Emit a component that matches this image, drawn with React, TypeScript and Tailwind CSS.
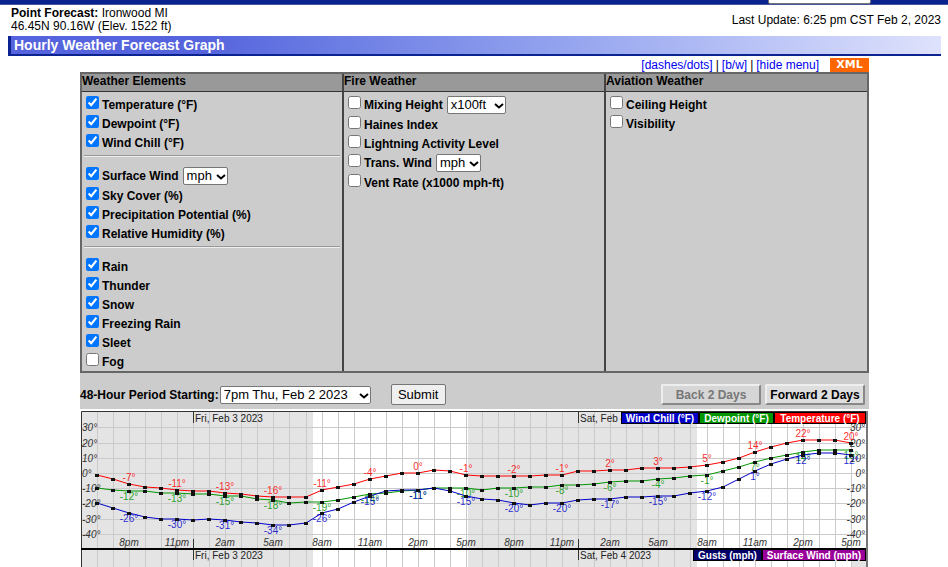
import { Fragment, ReactNode, SelectHTMLAttributes } from 'react';

interface ElementItem {
  id: string;
  label: string;
  checked?: boolean;
  units?: string[];
}

const weatherGroups: ElementItem[][] = [
  [
    { id: 'temp', label: 'Temperature (°F)', checked: true },
    { id: 'dewpoint', label: 'Dewpoint (°F)', checked: true },
    { id: 'chill', label: 'Wind Chill (°F)', checked: true },
  ],
  [
    { id: 'wind', label: 'Surface Wind', checked: true, units: ['mph', 'kts'] },
    { id: 'sky', label: 'Sky Cover (%)', checked: true },
    { id: 'pop', label: 'Precipitation Potential (%)', checked: true },
    { id: 'humidity', label: 'Relative Humidity (%)', checked: true },
  ],
  [
    { id: 'rain', label: 'Rain', checked: true },
    { id: 'thunder', label: 'Thunder', checked: true },
    { id: 'snow', label: 'Snow', checked: true },
    { id: 'fzrain', label: 'Freezing Rain', checked: true },
    { id: 'sleet', label: 'Sleet', checked: true },
    { id: 'fog', label: 'Fog' },
  ],
];

const fireGroups: ElementItem[][] = [
  [
    { id: 'mixing', label: 'Mixing Height', units: ['x100ft', 'x100m'] },
    { id: 'haines', label: 'Haines Index' },
    { id: 'lal', label: 'Lightning Activity Level' },
    { id: 'transwind', label: 'Trans. Wind', units: ['mph', 'kts'] },
    { id: 'vent', label: 'Vent Rate (x1000 mph-ft)' },
  ],
];

const aviationGroups: ElementItem[][] = [
  [
    { id: 'ceiling', label: 'Ceiling Height' },
    { id: 'visibility', label: 'Visibility' },
  ],
];

// hourly values, 6pm Thu through 5pm Sat
const temperature = [
  -1, -4, -7, -9, -10, -11, -12, -12, -13, -14, -15, -16, -16, -16, -11, -9, -7, -4, -2, 0, 0, 2, 1, -1,
  -2, -2, -2, -2, -1, -1, 1, 1, 2, 2, 3, 3, 3, 4, 5, 7, 10, 14, 17, 20, 22, 22, 22, 20,
];
const dewpoint = [
  -10, -11, -12, -12, -13, -13, -14, -14, -15, -15, -17, -18, -20, -19, -19, -18, -16, -14, -13, -12, -11, -10, -10, -10,
  -11, -10, -10, -9, -9, -8, -8, -7, -6, -5, -5, -4, -3, -2, -1, 1, 4, 7, 10, 12, 14, 15, 15, 15,
];
const windChill = [
  -20, -23, -26, -29, -30, -30, -31, -30, -31, -32, -33, -34, -34, -33, -26, -24, -19, -15, -12, -11, -11, -10, -12, -15,
  -17, -18, -20, -21, -20, -20, -18, -17, -17, -16, -16, -15, -15, -13, -12, -9, -4, 1, 6, 9, 12, 13, 13, 12,
];

const hourLabels = ['8pm', '11pm', '2am', '5am', '8am', '11am', '2pm', '5pm'];

const xAt = (i: number) => Math.round(17 + i * 16.04);
const yAt = (v: number) => Math.round(63 - v * 1.52);

function Select({ options, ...props }: { options: string[] } & SelectHTMLAttributes<HTMLSelectElement>) {
  return (
    <span className="relative flex font-normal">
      <select
        className="h-[18px] w-full appearance-none rounded-xs border border-[#767676] bg-white pr-3.5 pl-[3px] text-[13px] leading-4"
        {...props}
      >
        {options.map(o => (
          <option key={o}>{o}</option>
        ))}
      </select>
      <svg viewBox="0 0 10 6" className="pointer-events-none absolute top-[7px] right-0.5 h-1.5 w-2.5" fill="none" stroke="#000" strokeWidth={2}>
        <path d="M1 1L5 4.5L9 1" />
      </svg>
    </span>
  );
}

function ElementRow({ item }: { item: ElementItem }) {
  return (
    <div className="flex items-start">
      <input id={item.id} type="checkbox" defaultChecked={item.checked} className="h-[13px] w-[13px] shrink-0" />
      <label htmlFor={item.id} className="ml-[3px] leading-[18px]">
        {item.label}
      </label>
      {item.units && (
        <div className="mb-px ml-1">
          <Select options={item.units} aria-label={`${item.label} units`} />
        </div>
      )}
    </div>
  );
}

function ElementColumn({ title, groups }: { title: string; groups: ElementItem[][] }) {
  return (
    <section className="border-l-2 border-[#444] first:border-l-0">
      <h2 className="h-[18px] border-b border-[#333] bg-[#999] leading-[15px]">{title}</h2>
      <div className="px-1 pt-1">
        {groups.map((group, i) => (
          <Fragment key={i}>
            {i > 0 && <hr className="-mx-0.5 mt-[3px] mb-2.5 h-0.5 border-t border-b border-t-[#999] border-b-[#eee]" />}
            <div className="flex flex-col gap-px">
              {group.map(item => (
                <ElementRow key={item.id} item={item} />
              ))}
            </div>
          </Fragment>
        ))}
      </div>
    </section>
  );
}

function Series({ values, color, above }: { values: number[]; color: string; above?: boolean }) {
  return (
    <g>
      {values.map((v, i) =>
        i % 3 === 2 ? (
          <text key={i} x={xAt(i)} y={yAt(v) + (above ? -3 : 9)} textAnchor="middle" fill={color} fillOpacity={0.85}>
            {v}°
          </text>
        ) : null
      )}
      <polyline points={values.map((v, i) => `${xAt(i)},${yAt(v)}`).join(' ')} fill="none" stroke={color} />
      {values.map((v, i) => (
        <rect key={i} x={xAt(i) - 2} y={yAt(v) - 1} width={4} height={3} fill="#111" />
      ))}
    </g>
  );
}

function Legend({ x, y, width, color, children }: { x: number; y: number; width: number; color: string; children: ReactNode }) {
  return (
    <g>
      <rect x={x + 0.5} y={y + 0.5} width={width - 1} height={11} fill={color} stroke="#000" />
      <text x={x + width / 2} y={y + 10} textAnchor="middle" fill="#fff" fontWeight="bold">
        {children}
      </text>
    </g>
  );
}

function ForecastChart() {
  const degrees = [30, 20, 10, 0, -10, -20, -30, -40];
  return (
    <svg viewBox="0 0 789 157" className="block w-full text-[10px]" role="img" aria-label="Hourly forecast graph">
      <rect x={1} y={1} width={787} height={156} fill="#fff" />
      <rect x={2} y={1} width={231} height={156} fill="#e4e4e4" />
      <rect x={388} y={1} width={229} height={156} fill="#e4e4e4" />
      <rect x={772} y={139} width={15} height={18} fill="#e4e4e4" />

      <g stroke="#cacaca" shapeRendering="crispEdges">
        {temperature.map((_, i) => (
          <line key={i} x1={xAt(i) + 0.5} x2={xAt(i) + 0.5} y1={2} y2={157} />
        ))}
        {degrees.map(d => (
          <line key={d} x1={2} x2={786} y1={yAt(d) + 0.5} y2={yAt(d) + 0.5} />
        ))}
      </g>

      <g fill="#333" fontStyle="italic">
        {degrees.map(d => (
          <Fragment key={d}>
            <text x={2} y={yAt(d) + 4}>{d}°</text>
            <text x={785} y={yAt(d) + 4} textAnchor="end">{d}°</text>
          </Fragment>
        ))}
        {temperature.map((_, i) =>
          i % 3 === 2 ? (
            <text key={i} x={xAt(i)} y={136} textAnchor="middle">
              {hourLabels[((i - 2) / 3) % 8]}
            </text>
          ) : null
        )}
      </g>

      <path d="M113.5 2V13M113.5 129V150M498.5 2V13M498.5 129V150" stroke="#333" />
      <g fill="#222">
        <text x={115} y={12}>Fri, Feb 3 2023</text>
        <text x={500} y={12}>Sat, Feb 4 2023</text>
        <text x={115} y={149}>Fri, Feb 3 2023</text>
        <text x={500} y={149}>Sat, Feb 4 2023</text>
      </g>

      <Series values={temperature} color="#f00" above />
      <Series values={dewpoint} color="#009600" />
      <Series values={windChill} color="#0000c8" />

      <path d="M1.5 157V1.5H787" fill="none" stroke="#333" />
      <rect x={786} y={1} width={2} height={156} fill="#777" />
      <rect x={1} y={138} width={785} height={2} fill="#000" />

      <Legend x={541} y={2} width={78} color="#0000c8">Wind Chill (°F)</Legend>
      <Legend x={619} y={2} width={75} color="#009600">Dewpoint (°F)</Legend>
      <Legend x={694} y={2} width={92} color="#f00">Temperature (°F)</Legend>
      <Legend x={613} y={139} width={69} color="#000066">Gusts (mph)</Legend>
      <Legend x={682} y={139} width={104} color="#990099">Surface Wind (mph)</Legend>
    </svg>
  );
}

export default function App() {
  return (
    <div className="bg-white font-['Liberation_Sans',Arial,sans-serif] text-xs text-black">
      <div className="flex h-[5px] items-end justify-end overflow-hidden border-b border-[#44559c] bg-[#0a2390] pr-[77px]">
        <input type="text" aria-label="Search" className="h-5 w-[103px] shrink-0 rounded-xs border border-[#767676] bg-white" />
      </div>

      <div className="pr-[7px] pl-2">
        <header className="flex items-center justify-between pt-0.5 pl-[3px] leading-[13px]">
          <p>
            <b>Point Forecast:</b> Ironwood MI
            <br />
            46.45N 90.16W (Elev. 1522 ft)
          </p>
          <p>Last Update: 6:25 pm CST Feb 2, 2023</p>
        </header>

        <h1 className="mt-[3px] h-5 border-b-2 border-l-3 border-[#0c2492] bg-linear-to-r from-[#5563dc] from-20% to-[#dfe2fc] pl-[3px] text-sm leading-[18px] font-bold text-white">
          Hourly Weather Forecast Graph
        </h1>

        <main className="mx-auto w-full max-w-[789px]">
          <nav className="mt-0.5 flex h-3.5 items-center justify-end gap-[3px]">
            <a href="#dashes" className="text-[#0000ee]">[dashes/dots]</a>|
            <a href="#bw" className="text-[#0000ee]">[b/w]</a>|
            <a href="#hide" className="text-[#0000ee]">[hide menu]</a>
            <a
              href="#xml"
              className="ml-2 h-3.5 w-[39px] bg-[#ff6600] text-center font-['DejaVu_Sans',sans-serif] text-[11px] leading-[13px] font-bold text-white"
            >
              XML
            </a>
          </nav>

          <form className="mb-px bg-[#ccc] pb-1 font-bold">
            <div className="grid grid-cols-[260fr_262fr_263fr] border-2 border-[#666]">
              <ElementColumn title="Weather Elements" groups={weatherGroups} />
              <ElementColumn title="Fire Weather" groups={fireGroups} />
              <ElementColumn title="Aviation Weather" groups={aviationGroups} />
            </div>

            <div className="flex items-center pt-[11px]">
              <label htmlFor="period">48-Hour Period Starting:</label>
              <div className="ml-px w-[151px]">
                <Select id="period" options={['7pm Thu, Feb 2 2023']} />
              </div>
              <button
                type="button"
                className="ml-5 h-[21px] w-[55px] rounded-xs border border-[#767676] bg-[#efefef] text-[13px] font-normal"
              >
                Submit
              </button>
              <div className="ml-auto flex gap-1 pr-1">
                <button
                  type="button"
                  className="h-[21px] w-[100px] rounded-xs border-2 border-t-[#eee] border-r-[#888] border-b-[#888] border-l-[#eee] bg-[#d6d6d6] leading-4 text-[#777]"
                >
                  Back 2 Days
                </button>
                <button
                  type="button"
                  className="h-[21px] w-[100px] rounded-xs border-2 border-t-[#eee] border-r-[#888] border-b-[#888] border-l-[#eee] bg-[#dedede] leading-4"
                >
                  Forward 2 Days
                </button>
              </div>
            </div>
          </form>

          <ForecastChart />
        </main>
      </div>
    </div>
  );
}
